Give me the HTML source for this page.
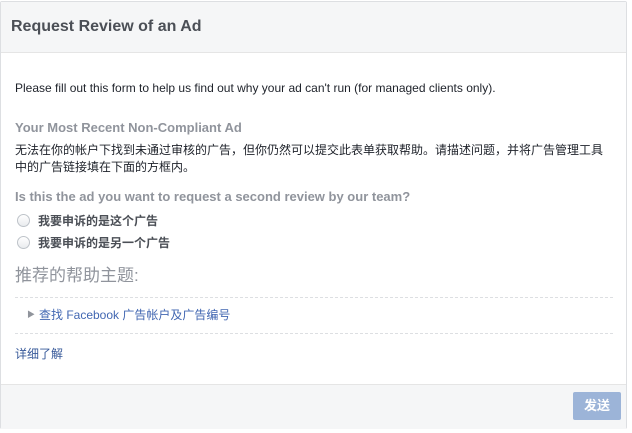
<!DOCTYPE html>
<html><head><meta charset="utf-8"><style>
*{margin:0;padding:0;box-sizing:border-box}
body{width:632px;height:433px;background:#fff;font-family:"Liberation Sans","Noto Sans CJK SC",sans-serif;position:relative;overflow:hidden;color:#1d2129}
.card{position:absolute;left:0;top:1px;width:627px;height:428px;border:1px solid #dddfe2;border-radius:2px}
.hdr{position:absolute;left:0;top:0;width:625px;height:51px;background:#f5f6f7;border-bottom:1px solid #e5e5e5}
.a{position:absolute;white-space:nowrap}
.ftr{position:absolute;left:0;top:382px;width:625px;height:45px;background:#f5f6f7;border-top:1px solid #e5e5e5}
.radio{position:absolute;width:13px;height:13px;border-radius:50%;border:1px solid #bec3c9;background:linear-gradient(#fff,#e9ebee)}
.dash{position:absolute;left:14px;width:598px;border-top:1px dashed #dddfe2}
</style></head><body>
<div class="card">
<div class="hdr"></div>
<div class="a" style="left:10px;top:16px;font-size:16px;font-weight:bold;color:#4b4f56">Request Review of an Ad</div>
<div class="a" style="left:14px;top:79px;font-size:12px;color:#1d2129">Please fill out this form to help us find out why your ad can't run (for managed clients only).</div>
<div class="a" style="left:14px;top:118px;font-size:13px;font-weight:bold;color:#90949c">Your Most Recent Non-Compliant Ad</div>
<div class="a" style="left:14px;top:140px;font-size:12px;line-height:17px;color:#1d2129">无法在你的帐户下找到未通过审核的广告，但你仍然可以提交此表单获取帮助。请描述问题，并将广告管理工具<br>中的广告链接填在下面的方框内。</div>
<div class="a" style="left:14px;top:187px;font-size:13px;font-weight:bold;color:#90949c">Is this the ad you want to request a second review by our team?</div>
<div class="radio" style="left:16px;top:212px"></div>
<div class="a" style="left:37px;top:210px;font-size:12px;font-weight:bold;color:#4b4f56">我要申诉的是这个广告</div>
<div class="radio" style="left:16px;top:234px"></div>
<div class="a" style="left:37px;top:232px;font-size:12px;font-weight:bold;color:#4b4f56">我要申诉的是另一个广告</div>
<div class="a" style="left:14px;top:259px;font-size:17px;color:#90949c">推荐的帮助主题:</div>
<div class="dash" style="top:295px"></div>
<div class="a" style="left:26px;top:307px;font-size:8px;color:#90949c">▶</div>
<div class="a" style="left:38px;top:304px;font-size:12px;color:#4267b2">查找 Facebook 广告帐户及广告编号</div>
<div class="dash" style="top:331px"></div>
<div class="a" style="left:14px;top:343px;font-size:12px;color:#365899">详细了解</div>
<div class="ftr"></div>
<div class="a" style="left:572px;top:390px;width:48px;height:28px;background:#9cb4d8;border-radius:2px;color:#fff;font-size:13px;font-weight:bold;text-align:center;line-height:28px">发送</div>
</div>
</body></html>
